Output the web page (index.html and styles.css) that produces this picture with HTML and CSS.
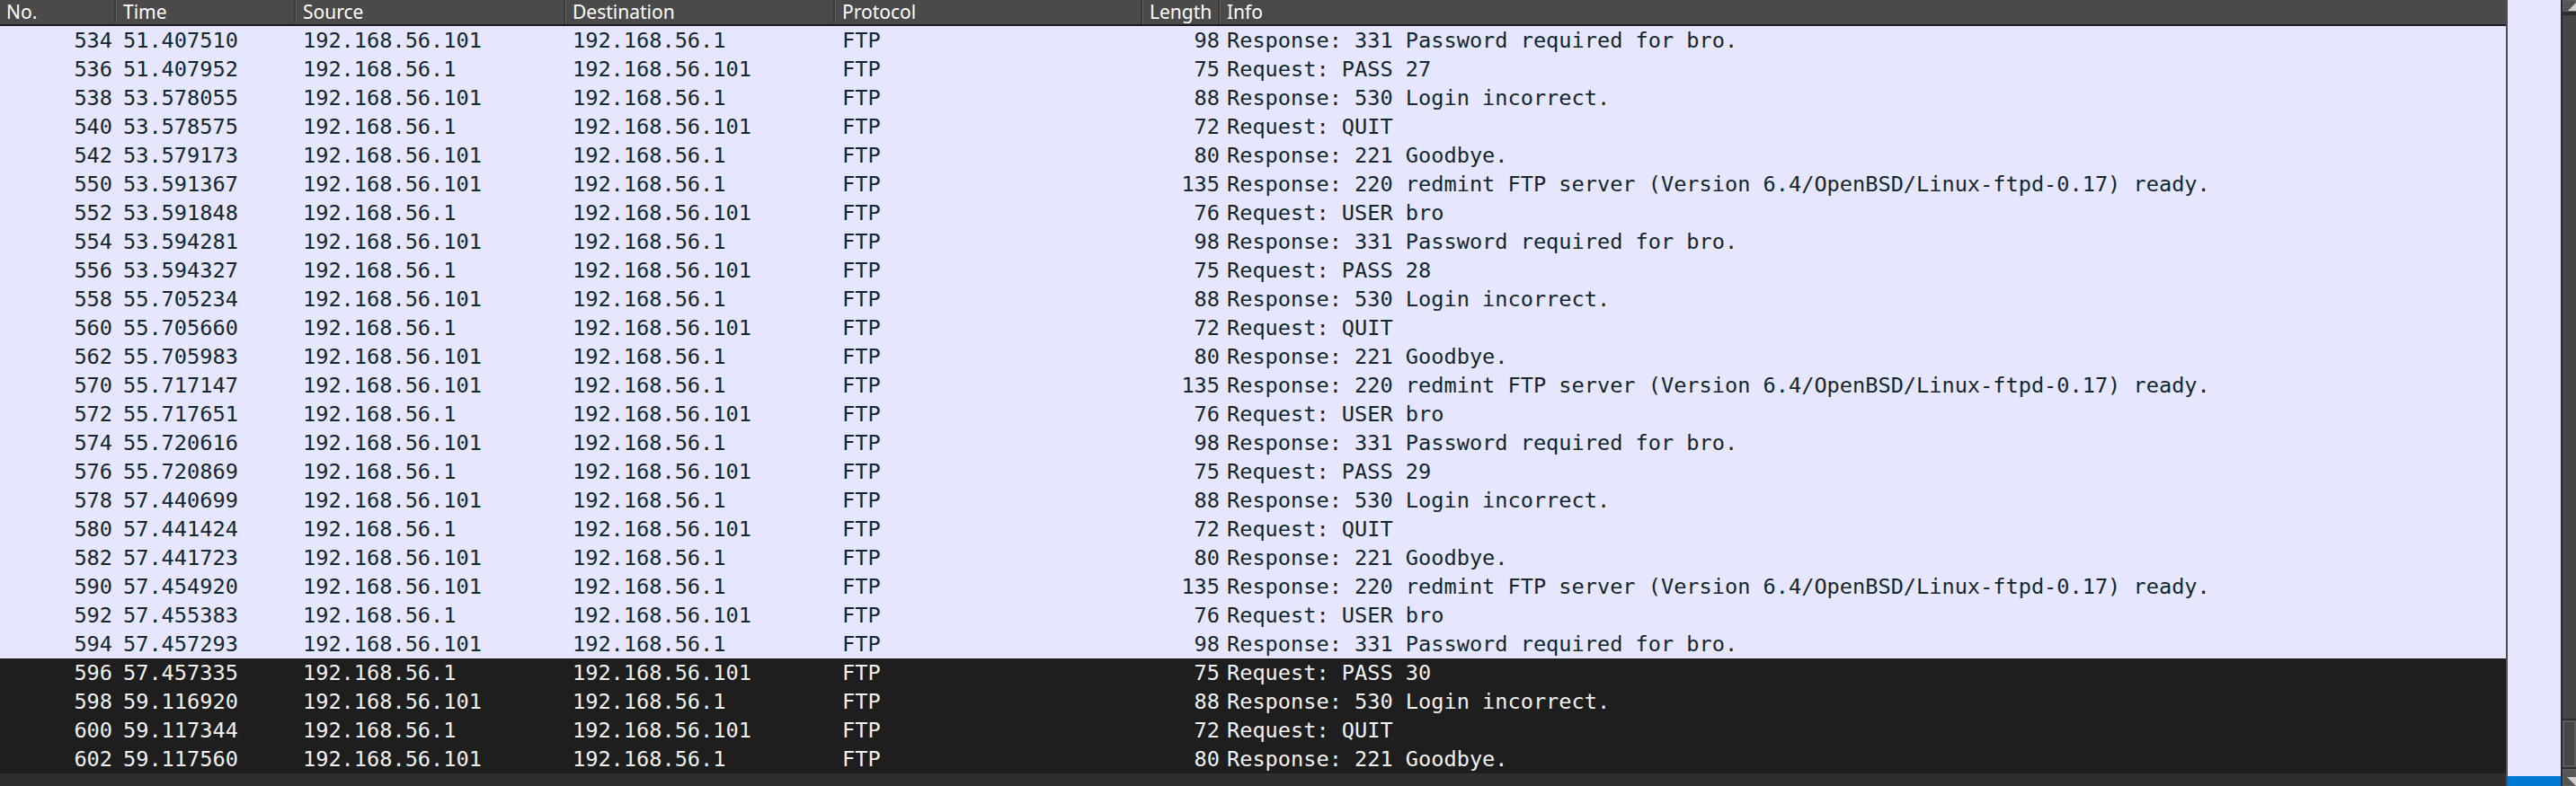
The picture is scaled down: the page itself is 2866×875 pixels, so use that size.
FILE: index.html
```html
<!DOCTYPE html>
<html>
<head>
<meta charset="utf-8">
<link rel="stylesheet" href="styles.css">
</head>
<body>
<div class="app">
  <div class="table">
    <div class="head">
      <div class="hc">No.</div>
      <div class="hc">Time</div>
      <div class="hc">Source</div>
      <div class="hc">Destination</div>
      <div class="hc">Protocol</div>
      <div class="hc">Length</div>
      <div class="hc last">Info</div>
    </div>
    <div class="rows">
      <div class="row"><span class="num">534</span><span>51.407510</span><span>192.168.56.101</span><span>192.168.56.1</span><span>FTP</span><span class="len">98</span><span>Response: 331 Password required for bro.</span></div>
      <div class="row"><span class="num">536</span><span>51.407952</span><span>192.168.56.1</span><span>192.168.56.101</span><span>FTP</span><span class="len">75</span><span>Request: PASS 27</span></div>
      <div class="row"><span class="num">538</span><span>53.578055</span><span>192.168.56.101</span><span>192.168.56.1</span><span>FTP</span><span class="len">88</span><span>Response: 530 Login incorrect.</span></div>
      <div class="row"><span class="num">540</span><span>53.578575</span><span>192.168.56.1</span><span>192.168.56.101</span><span>FTP</span><span class="len">72</span><span>Request: QUIT</span></div>
      <div class="row"><span class="num">542</span><span>53.579173</span><span>192.168.56.101</span><span>192.168.56.1</span><span>FTP</span><span class="len">80</span><span>Response: 221 Goodbye.</span></div>
      <div class="row"><span class="num">550</span><span>53.591367</span><span>192.168.56.101</span><span>192.168.56.1</span><span>FTP</span><span class="len">135</span><span>Response: 220 redmint FTP server (Version 6.4/OpenBSD/Linux-ftpd-0.17) ready.</span></div>
      <div class="row"><span class="num">552</span><span>53.591848</span><span>192.168.56.1</span><span>192.168.56.101</span><span>FTP</span><span class="len">76</span><span>Request: USER bro</span></div>
      <div class="row"><span class="num">554</span><span>53.594281</span><span>192.168.56.101</span><span>192.168.56.1</span><span>FTP</span><span class="len">98</span><span>Response: 331 Password required for bro.</span></div>
      <div class="row"><span class="num">556</span><span>53.594327</span><span>192.168.56.1</span><span>192.168.56.101</span><span>FTP</span><span class="len">75</span><span>Request: PASS 28</span></div>
      <div class="row"><span class="num">558</span><span>55.705234</span><span>192.168.56.101</span><span>192.168.56.1</span><span>FTP</span><span class="len">88</span><span>Response: 530 Login incorrect.</span></div>
      <div class="row"><span class="num">560</span><span>55.705660</span><span>192.168.56.1</span><span>192.168.56.101</span><span>FTP</span><span class="len">72</span><span>Request: QUIT</span></div>
      <div class="row"><span class="num">562</span><span>55.705983</span><span>192.168.56.101</span><span>192.168.56.1</span><span>FTP</span><span class="len">80</span><span>Response: 221 Goodbye.</span></div>
      <div class="row"><span class="num">570</span><span>55.717147</span><span>192.168.56.101</span><span>192.168.56.1</span><span>FTP</span><span class="len">135</span><span>Response: 220 redmint FTP server (Version 6.4/OpenBSD/Linux-ftpd-0.17) ready.</span></div>
      <div class="row"><span class="num">572</span><span>55.717651</span><span>192.168.56.1</span><span>192.168.56.101</span><span>FTP</span><span class="len">76</span><span>Request: USER bro</span></div>
      <div class="row"><span class="num">574</span><span>55.720616</span><span>192.168.56.101</span><span>192.168.56.1</span><span>FTP</span><span class="len">98</span><span>Response: 331 Password required for bro.</span></div>
      <div class="row"><span class="num">576</span><span>55.720869</span><span>192.168.56.1</span><span>192.168.56.101</span><span>FTP</span><span class="len">75</span><span>Request: PASS 29</span></div>
      <div class="row"><span class="num">578</span><span>57.440699</span><span>192.168.56.101</span><span>192.168.56.1</span><span>FTP</span><span class="len">88</span><span>Response: 530 Login incorrect.</span></div>
      <div class="row"><span class="num">580</span><span>57.441424</span><span>192.168.56.1</span><span>192.168.56.101</span><span>FTP</span><span class="len">72</span><span>Request: QUIT</span></div>
      <div class="row"><span class="num">582</span><span>57.441723</span><span>192.168.56.101</span><span>192.168.56.1</span><span>FTP</span><span class="len">80</span><span>Response: 221 Goodbye.</span></div>
      <div class="row"><span class="num">590</span><span>57.454920</span><span>192.168.56.101</span><span>192.168.56.1</span><span>FTP</span><span class="len">135</span><span>Response: 220 redmint FTP server (Version 6.4/OpenBSD/Linux-ftpd-0.17) ready.</span></div>
      <div class="row"><span class="num">592</span><span>57.455383</span><span>192.168.56.1</span><span>192.168.56.101</span><span>FTP</span><span class="len">76</span><span>Request: USER bro</span></div>
      <div class="row"><span class="num">594</span><span>57.457293</span><span>192.168.56.101</span><span>192.168.56.1</span><span>FTP</span><span class="len">98</span><span>Response: 331 Password required for bro.</span></div>
      <div class="row sel"><span class="num">596</span><span>57.457335</span><span>192.168.56.1</span><span>192.168.56.101</span><span>FTP</span><span class="len">75</span><span>Request: PASS 30</span></div>
      <div class="row sel"><span class="num">598</span><span>59.116920</span><span>192.168.56.101</span><span>192.168.56.1</span><span>FTP</span><span class="len">88</span><span>Response: 530 Login incorrect.</span></div>
      <div class="row sel"><span class="num">600</span><span>59.117344</span><span>192.168.56.1</span><span>192.168.56.101</span><span>FTP</span><span class="len">72</span><span>Request: QUIT</span></div>
      <div class="row sel"><span class="num">602</span><span>59.117560</span><span>192.168.56.101</span><span>192.168.56.1</span><span>FTP</span><span class="len">80</span><span>Response: 221 Goodbye.</span></div>
    </div>
    <div class="hscroll"></div>
  </div>
  <div class="minimap">
    <div class="mm-fill"></div>
    <div class="mm-pos"></div>
  </div>
  <div class="vscroll">
    <div class="arrow up"><svg width="15" height="13" viewBox="0 0 15 13"><polygon points="15,3 15,12 6,12" fill="#cfcfcf"/></svg></div>
    <div class="track"></div>
    <div class="thumb"></div>
    <div class="arrow down"><svg width="15" height="19" viewBox="0 0 15 19"><polygon points="5,9 15,9 15,19" fill="#cfcfcf"/></svg></div>
  </div>
</div>
</body>
</html>
```
FILE: styles.css
```css
html, body {
  margin: 0;
  padding: 0;
  background: #1f1f1f;
}
body {
  width: 2866px;
  height: 875px;
  overflow: hidden;
}
.app {
  display: flex;
  width: 2866px;
  height: 875px;
}
.table {
  width: 2788px;
  border-right: 2px solid #4e4e4e;
  display: flex;
  flex-direction: column;
  background: #e6e6fe;
}
.head {
  display: grid;
  grid-template-columns: 130px 200px 300px 300px 342px 86px 1fr;
  height: 27px;
  background: #4a4a4a;
  border-bottom: 2px solid #1c1c1c;
}
.hc {
  font-family: "Noto Sans", "Open Sans", sans-serif;
  font-size: 21px;
  line-height: 26px;
  color: #ffffff;
  padding-left: 7px;
  border-right: 1px solid #626262;
  box-shadow: inset -2px 0 0 #3c3c3c;
  white-space: nowrap;
}
.hc.last {
  border-right: none;
  box-shadow: none;
}
.rows {
  display: flex;
  flex-direction: column;
}
.row {
  display: grid;
  grid-template-columns: 130px 200px 300px 300px 342px 86px 1fr;
  height: 32px;
  background: #e6e6fe;
  color: #12272e;
  font-family: "DejaVu Sans Mono", "Liberation Mono", monospace;
  font-size: 23.6px;
  line-height: 33px;
  white-space: nowrap;
}
.row span {
  padding-left: 7px;
  overflow: hidden;
}
.row span.num {
  text-align: right;
  padding-left: 0;
  padding-right: 5px;
}
.row span.len {
  text-align: right;
  padding-left: 0;
  padding-right: 1px;
}
.row.sel {
  background: #1e1e1e;
  color: #f2f2f2;
}
.hscroll {
  flex: 1;
  background: #2e2e2e;
}
.minimap {
  width: 59px;
  display: flex;
  flex-direction: column;
  background: #e6e6fe;
}
.mm-fill {
  flex: 1;
}
.mm-pos {
  height: 11px;
  background: #0078d4;
}
.vscroll {
  width: 15px;
  border-left: 2px solid #2a2a2a;
  background: #464646;
  display: flex;
  flex-direction: column;
}
.arrow {
  background: #555555;
  box-shadow: inset 0 0 0 1px #626262;
}
.arrow.up {
  height: 13px;
  border-bottom: 4px solid #2c2c2c;
}
.arrow.up svg, .arrow.down svg {
  display: block;
}
.track {
  flex: 1;
  background: #454545;
}
.thumb {
  height: 52px;
  background: #474747;
  box-shadow: inset 0 0 0 2px #5c5c5c;
  border-top: 2px solid #2c2c2c;
  border-bottom: 2px solid #2c2c2c;
}
.arrow.down {
  height: 19px;
}
```
